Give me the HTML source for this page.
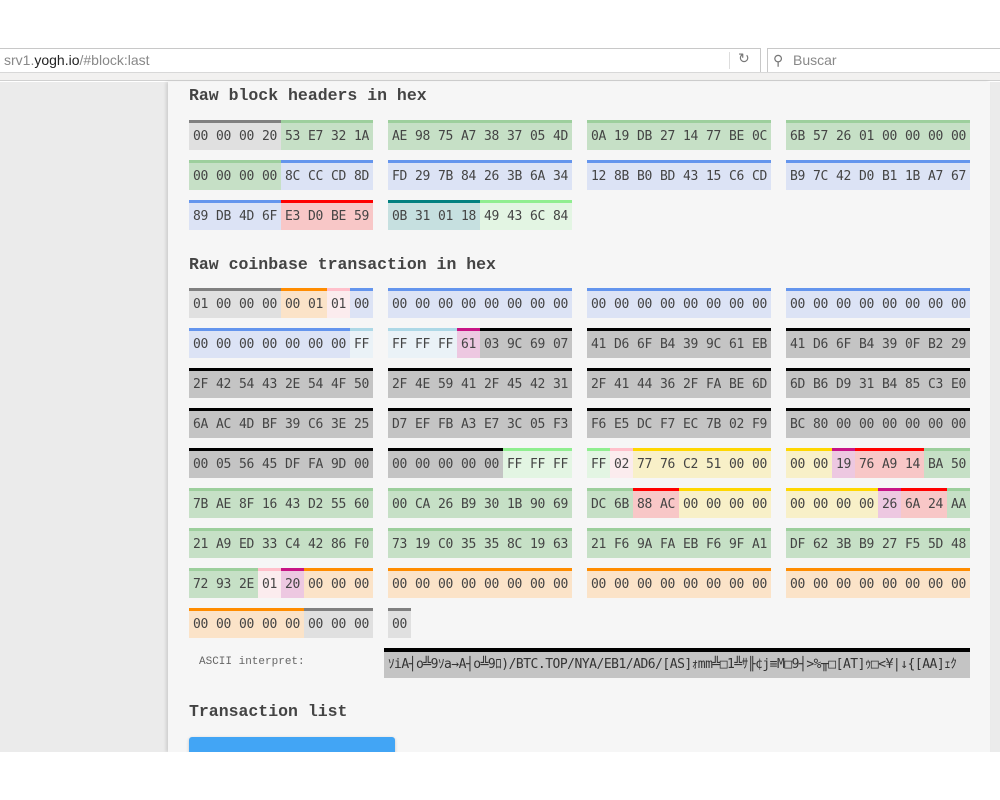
<!DOCTYPE html>
<html><head><meta charset="utf-8"><style>
*{margin:0;padding:0;box-sizing:border-box}
body{width:1000px;height:800px;background:#fff;position:relative;overflow:hidden;font-family:"Liberation Sans",sans-serif}
#top{position:absolute;left:0;top:0;width:1000px;height:81px;background:#fff}
#strip{position:absolute;left:0;top:72px;width:1000px;height:9px;background:#f2f1f0;border-top:1px solid #d8d8d8;border-bottom:1px solid #d0d0d0}
#url{position:absolute;left:-2px;top:48px;width:763px;height:25px;border:1px solid #c8c8c8;background:#fff;font-size:14px;color:#888;line-height:23px;padding-left:5px}
#url b{font-weight:normal;color:#222}
#rel{position:absolute;left:729px;top:52px;width:1px;height:17px;background:#ddd}
#relicon{position:absolute;left:738px;top:50px;font-size:14px;color:#777}
#search{position:absolute;left:767px;top:48px;width:240px;height:25px;border:1px solid #c8c8c8;background:#fff;font-size:14px;color:#888;line-height:23px;padding-left:25px}
#side{position:absolute;left:0;top:82px;width:1000px;height:670px;background:#ebebeb}
#panel{position:absolute;left:168px;top:82px;width:822px;height:670px;background:#f6f6f6;box-shadow:-2px 0 3px rgba(0,0,0,.12)}
h2{position:absolute;left:189px;font:bold 16.5px "Liberation Mono",monospace;color:#444}
.row{position:absolute;left:189px;display:flex;height:30px}
.g{display:flex;width:184px;margin-right:15px}
.s{display:flex;border-top:3px solid;height:30px}
.s i{font-style:normal;width:23px;text-align:center;font:13px "DejaVu Sans Mono","Liberation Mono",monospace;color:#444;line-height:27px;letter-spacing:-0.3px}
.gy{border-color:#808080;background:#e0e0e0}
.gr{border-color:#9dcf9d;background:#c6e0c6}
.bl{border-color:#6495ed;background:#dce3f5}
.rd{border-color:#ff0000;background:#f8c7c7}
.tl{border-color:#008080;background:#c6e0e0}
.lg{border-color:#90ee90;background:#e3f5e3}
.or{border-color:#ff8c00;background:#fbe3c8}
.pk{border-color:#ffc0cb;background:#fbecee}
.lb{border-color:#add8e6;background:#eaf2f7}
.mg{border-color:#c71585;background:#edc8e1}
.bk{border-color:#000;background:#c4c4c4}
.yl{border-color:#ffd700;background:#f8f0c8}
#lbl{position:absolute;left:199px;top:656px;font:11px "Liberation Mono",monospace;color:#666}
#ascii{position:absolute;left:384px;top:648px;width:586px;height:30px;border-top:4px solid #000;background:#c4c4c4;font:13px "DejaVu Sans Mono","Liberation Mono","Noto Sans CJK JP",monospace;color:#333;line-height:26px;padding-left:4px;white-space:nowrap;overflow:hidden;letter-spacing:-0.5px}
#btn{position:absolute;left:189px;top:737px;width:206px;height:20px;background:#42a5f5;border-radius:3px;box-shadow:0 1px 3px rgba(0,0,0,.2)}
#bot{position:absolute;left:0;top:752px;width:1000px;height:48px;background:#fff}
</style></head><body>
<div id="top"></div>
<div id="url">srv1.<b>yogh.io</b>/#block:last</div>
<div id="rel"></div><div id="relicon">↻</div>
<div id="search"><span style="position:absolute;left:5px;top:0;color:#777">⚲</span>Buscar</div>
<div id="strip"></div>
<div id="side"></div>
<div id="panel"></div>

<h2 style="top:86px">Raw block headers in hex</h2>
<div class="row" style="top:120px">
<div class="g"><div class="s gy"><i>00</i><i>00</i><i>00</i><i>20</i></div><div class="s gr"><i>53</i><i>E7</i><i>32</i><i>1A</i></div></div>
<div class="g"><div class="s gr"><i>AE</i><i>98</i><i>75</i><i>A7</i><i>38</i><i>37</i><i>05</i><i>4D</i></div></div>
<div class="g"><div class="s gr"><i>0A</i><i>19</i><i>DB</i><i>27</i><i>14</i><i>77</i><i>BE</i><i>0C</i></div></div>
<div class="g"><div class="s gr"><i>6B</i><i>57</i><i>26</i><i>01</i><i>00</i><i>00</i><i>00</i><i>00</i></div></div>
</div>
<div class="row" style="top:160px">
<div class="g"><div class="s gr"><i>00</i><i>00</i><i>00</i><i>00</i></div><div class="s bl"><i>8C</i><i>CC</i><i>CD</i><i>8D</i></div></div>
<div class="g"><div class="s bl"><i>FD</i><i>29</i><i>7B</i><i>84</i><i>26</i><i>3B</i><i>6A</i><i>34</i></div></div>
<div class="g"><div class="s bl"><i>12</i><i>8B</i><i>B0</i><i>BD</i><i>43</i><i>15</i><i>C6</i><i>CD</i></div></div>
<div class="g"><div class="s bl"><i>B9</i><i>7C</i><i>42</i><i>D0</i><i>B1</i><i>1B</i><i>A7</i><i>67</i></div></div>
</div>
<div class="row" style="top:200px">
<div class="g"><div class="s bl"><i>89</i><i>DB</i><i>4D</i><i>6F</i></div><div class="s rd"><i>E3</i><i>D0</i><i>BE</i><i>59</i></div></div>
<div class="g"><div class="s tl"><i>0B</i><i>31</i><i>01</i><i>18</i></div><div class="s lg"><i>49</i><i>43</i><i>6C</i><i>84</i></div></div>
</div>

<h2 style="top:255px">Raw coinbase transaction in hex</h2>
<div class="row" style="top:288px">
<div class="g"><div class="s gy"><i>01</i><i>00</i><i>00</i><i>00</i></div><div class="s or"><i>00</i><i>01</i></div><div class="s pk"><i>01</i></div><div class="s bl"><i>00</i></div></div>
<div class="g"><div class="s bl"><i>00</i><i>00</i><i>00</i><i>00</i><i>00</i><i>00</i><i>00</i><i>00</i></div></div>
<div class="g"><div class="s bl"><i>00</i><i>00</i><i>00</i><i>00</i><i>00</i><i>00</i><i>00</i><i>00</i></div></div>
<div class="g"><div class="s bl"><i>00</i><i>00</i><i>00</i><i>00</i><i>00</i><i>00</i><i>00</i><i>00</i></div></div>
</div>
<div class="row" style="top:328px">
<div class="g"><div class="s bl"><i>00</i><i>00</i><i>00</i><i>00</i><i>00</i><i>00</i><i>00</i></div><div class="s lb"><i>FF</i></div></div>
<div class="g"><div class="s lb"><i>FF</i><i>FF</i><i>FF</i></div><div class="s mg"><i>61</i></div><div class="s bk"><i>03</i><i>9C</i><i>69</i><i>07</i></div></div>
<div class="g"><div class="s bk"><i>41</i><i>D6</i><i>6F</i><i>B4</i><i>39</i><i>9C</i><i>61</i><i>EB</i></div></div>
<div class="g"><div class="s bk"><i>41</i><i>D6</i><i>6F</i><i>B4</i><i>39</i><i>0F</i><i>B2</i><i>29</i></div></div>
</div>
<div class="row" style="top:368px">
<div class="g"><div class="s bk"><i>2F</i><i>42</i><i>54</i><i>43</i><i>2E</i><i>54</i><i>4F</i><i>50</i></div></div>
<div class="g"><div class="s bk"><i>2F</i><i>4E</i><i>59</i><i>41</i><i>2F</i><i>45</i><i>42</i><i>31</i></div></div>
<div class="g"><div class="s bk"><i>2F</i><i>41</i><i>44</i><i>36</i><i>2F</i><i>FA</i><i>BE</i><i>6D</i></div></div>
<div class="g"><div class="s bk"><i>6D</i><i>B6</i><i>D9</i><i>31</i><i>B4</i><i>85</i><i>C3</i><i>E0</i></div></div>
</div>
<div class="row" style="top:408px">
<div class="g"><div class="s bk"><i>6A</i><i>AC</i><i>4D</i><i>BF</i><i>39</i><i>C6</i><i>3E</i><i>25</i></div></div>
<div class="g"><div class="s bk"><i>D7</i><i>EF</i><i>FB</i><i>A3</i><i>E7</i><i>3C</i><i>05</i><i>F3</i></div></div>
<div class="g"><div class="s bk"><i>F6</i><i>E5</i><i>DC</i><i>F7</i><i>EC</i><i>7B</i><i>02</i><i>F9</i></div></div>
<div class="g"><div class="s bk"><i>BC</i><i>80</i><i>00</i><i>00</i><i>00</i><i>00</i><i>00</i><i>00</i></div></div>
</div>
<div class="row" style="top:448px">
<div class="g"><div class="s bk"><i>00</i><i>05</i><i>56</i><i>45</i><i>DF</i><i>FA</i><i>9D</i><i>00</i></div></div>
<div class="g"><div class="s bk"><i>00</i><i>00</i><i>00</i><i>00</i><i>00</i></div><div class="s lg"><i>FF</i><i>FF</i><i>FF</i></div></div>
<div class="g"><div class="s lg"><i>FF</i></div><div class="s pk"><i>02</i></div><div class="s yl"><i>77</i><i>76</i><i>C2</i><i>51</i><i>00</i><i>00</i></div></div>
<div class="g"><div class="s yl"><i>00</i><i>00</i></div><div class="s mg"><i>19</i></div><div class="s rd"><i>76</i><i>A9</i><i>14</i></div><div class="s gr"><i>BA</i><i>50</i></div></div>
</div>
<div class="row" style="top:488px">
<div class="g"><div class="s gr"><i>7B</i><i>AE</i><i>8F</i><i>16</i><i>43</i><i>D2</i><i>55</i><i>60</i></div></div>
<div class="g"><div class="s gr"><i>00</i><i>CA</i><i>26</i><i>B9</i><i>30</i><i>1B</i><i>90</i><i>69</i></div></div>
<div class="g"><div class="s gr"><i>DC</i><i>6B</i></div><div class="s rd"><i>88</i><i>AC</i></div><div class="s yl"><i>00</i><i>00</i><i>00</i><i>00</i></div></div>
<div class="g"><div class="s yl"><i>00</i><i>00</i><i>00</i><i>00</i></div><div class="s mg"><i>26</i></div><div class="s rd"><i>6A</i><i>24</i></div><div class="s gr"><i>AA</i></div></div>
</div>
<div class="row" style="top:528px">
<div class="g"><div class="s gr"><i>21</i><i>A9</i><i>ED</i><i>33</i><i>C4</i><i>42</i><i>86</i><i>F0</i></div></div>
<div class="g"><div class="s gr"><i>73</i><i>19</i><i>C0</i><i>35</i><i>35</i><i>8C</i><i>19</i><i>63</i></div></div>
<div class="g"><div class="s gr"><i>21</i><i>F6</i><i>9A</i><i>FA</i><i>EB</i><i>F6</i><i>9F</i><i>A1</i></div></div>
<div class="g"><div class="s gr"><i>DF</i><i>62</i><i>3B</i><i>B9</i><i>27</i><i>F5</i><i>5D</i><i>48</i></div></div>
</div>
<div class="row" style="top:568px">
<div class="g"><div class="s gr"><i>72</i><i>93</i><i>2E</i></div><div class="s pk"><i>01</i></div><div class="s mg"><i>20</i></div><div class="s or"><i>00</i><i>00</i><i>00</i></div></div>
<div class="g"><div class="s or"><i>00</i><i>00</i><i>00</i><i>00</i><i>00</i><i>00</i><i>00</i><i>00</i></div></div>
<div class="g"><div class="s or"><i>00</i><i>00</i><i>00</i><i>00</i><i>00</i><i>00</i><i>00</i><i>00</i></div></div>
<div class="g"><div class="s or"><i>00</i><i>00</i><i>00</i><i>00</i><i>00</i><i>00</i><i>00</i><i>00</i></div></div>
</div>
<div class="row" style="top:608px">
<div class="g"><div class="s or"><i>00</i><i>00</i><i>00</i><i>00</i><i>00</i></div><div class="s gy"><i>00</i><i>00</i><i>00</i></div></div>
<div class="g"><div class="s gy"><i>00</i></div></div>
</div>

<div id="lbl">ASCII interpret:</div>
<div id="ascii">ｿiA┤o╩9ｿa→A┤o╩9ﾛ)/BTC.TOP/NYA/EB1/AD6/[AS]ｫmm╩□1╩ｻ╟¢j≡M□9┤&gt;%╥□[AT]ｩ□&lt;¥|↓{[AA]ｪｸ</div>

<h2 style="top:702px">Transaction list</h2>
<div id="btn"></div>
<div id="bot"></div>
</body></html>
